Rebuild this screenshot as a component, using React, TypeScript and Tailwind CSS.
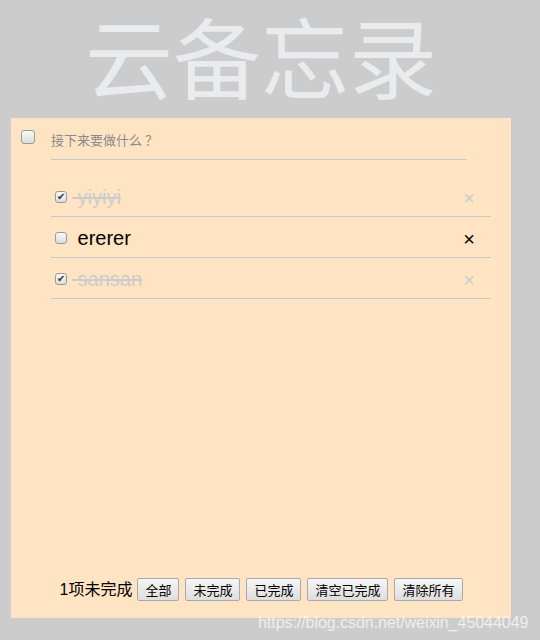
import React from 'react';

const todos = [
  { id: 1, text: 'yiyiyi', done: true },
  { id: 2, text: 'ererer', done: false },
  { id: 3, text: 'sansan', done: true },
];

const filters = ['全部', '未完成', '已完成', '清空已完成', '清除所有'];

const Box: React.FC<{ checked?: boolean; size: string }> = ({ checked, size }) => (
  <span
    className={`${size} flex shrink-0 items-center justify-center rounded-[3px] border border-[#9a9a9a] bg-gradient-to-b from-[#fafafa] to-[#dcdcdc] text-[10px] leading-none text-[#333]`}
  >
    {checked ? '✔' : ''}
  </span>
);

const App: React.FC = () => {
  return (
    <div className="relative h-[640px] w-[540px] overflow-hidden bg-[#cccccc] font-['Liberation_Sans','Noto_Sans_CJK_SC',sans-serif]">
      {/* Title */}
      <h1 className="w-[522px] pb-[16px] pt-[5px] text-center font-['Noto_Sans_CJK_SC',sans-serif] text-[88px] leading-[97px] text-[#e9ecef]">
        云备忘录
      </h1>

      {/* Card */}
      <div className="ml-[11px] flex h-[500px] w-[500px] flex-col bg-[#ffe4c4]">
        {/* New todo */}
        <div className="flex pl-[10px] pt-[12px]">
          <Box size="h-[14px] w-[14px]" />
          <div className="ml-[16px] h-[30px] w-[416px] border-b border-[#c8c8c8] pt-[1px] font-['Noto_Sans_CJK_SC',sans-serif] text-[13px] leading-[18px] text-[#8a8a8a]">
            接下来要做什么<span className="ml-[3px]">？</span>
          </div>
        </div>

        {/* List */}
        <ul className="ml-[40px] mt-[16px] w-[440px]">
          {todos.map((t) => (
            <li key={t.id} className="flex h-[41px] items-center border-b border-[#c8c8c8] pt-[1px]">
              <span className="ml-[4px]">
                <Box checked={t.done} size="h-[12px] w-[12px]" />
              </span>
              <span
                className={`ml-[5px] text-[20px] leading-none ${t.done ? 'text-[#cccccc] line-through' : 'text-black'}`}
              >
                {'\u00a0' + t.text}
              </span>
              <span className={`ml-auto mr-[16px] pt-[2px] text-[20px] leading-none ${t.done ? 'text-[#cccccc]' : 'text-black'}`}>×</span>
            </li>
          ))}
        </ul>

        {/* Footer */}
        <div className="mt-auto flex items-center justify-center pb-[16px] font-['Noto_Sans_CJK_SC',sans-serif]">
          <span className="mr-[5px] text-[16px] text-black">
            <span className="font-['Liberation_Sans',sans-serif]">1</span>项未完成
          </span>
          <div className="flex gap-[6px]">
            {filters.map((f) => (
              <button
                key={f}
                className="h-[23px] rounded-[2px] border border-[#a9a9a9] bg-gradient-to-b from-[#f6f6f6] to-[#dedede] px-[7px] text-[13px] leading-none text-black"
              >
                {f}
              </button>
            ))}
          </div>
        </div>
      </div>

      {/* Watermark */}
      <div className="absolute left-[258px] top-[611px] text-[16px] tracking-[-0.05px] text-white/70">
        https://blog.csdn.net/weixin_45044049
      </div>
    </div>
  );
};

export default App;
